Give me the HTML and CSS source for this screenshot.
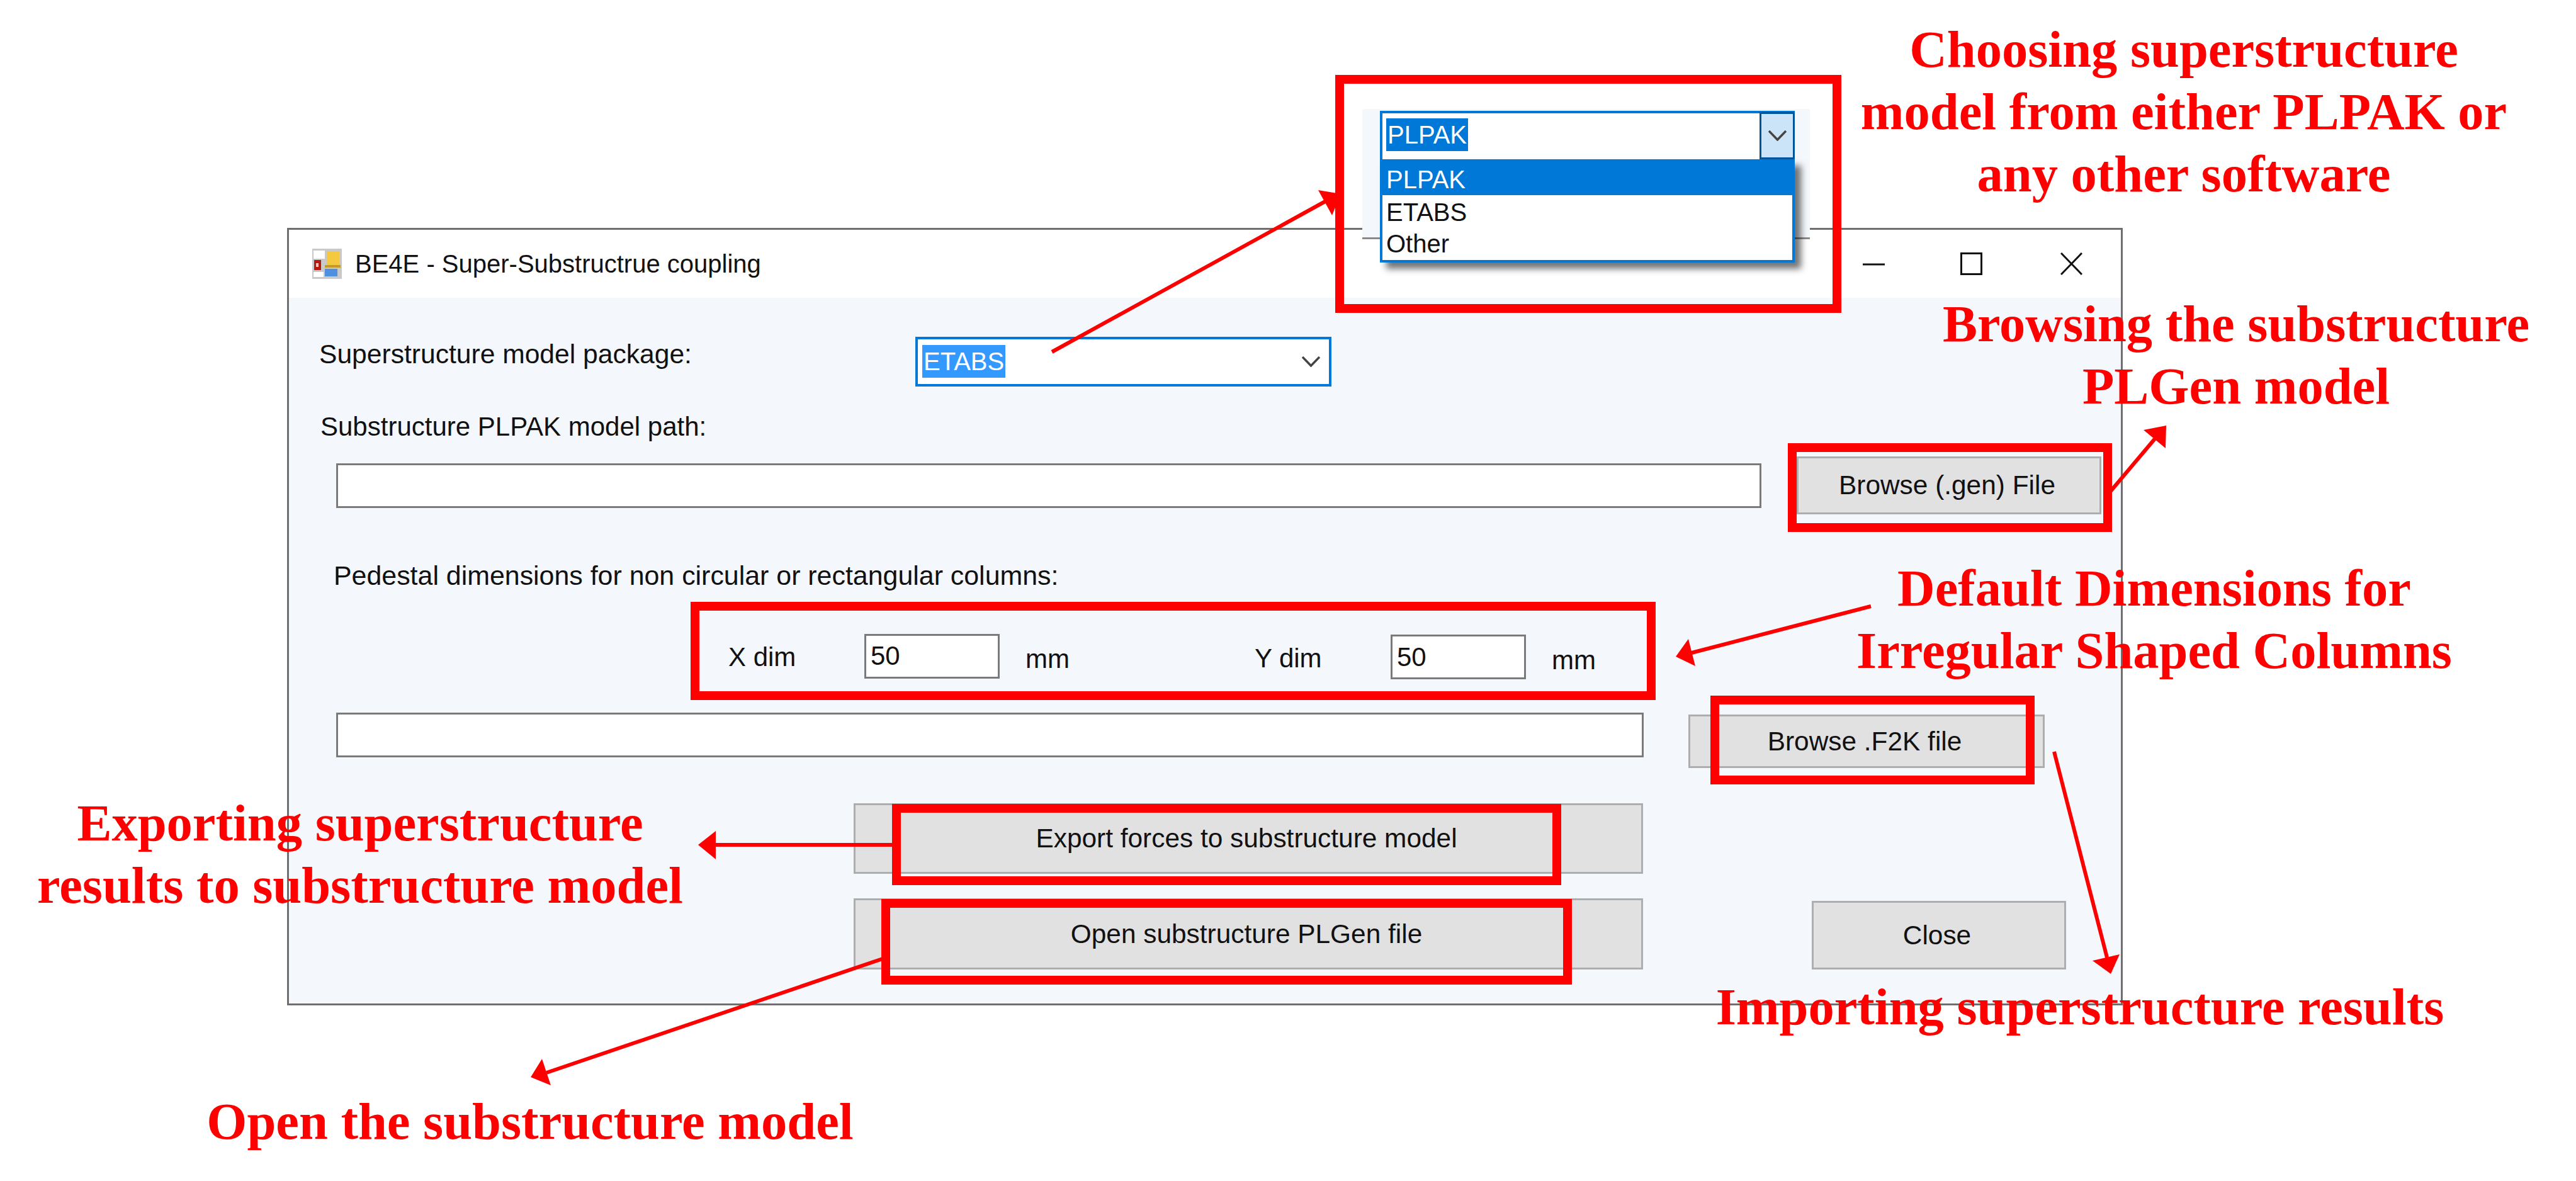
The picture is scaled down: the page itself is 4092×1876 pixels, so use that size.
FILE: index.html
```html
<!DOCTYPE html>
<html lang="en">
<head>
  <meta charset="UTF-8" />
  <title>BE4E - Super-Substructrue coupling</title>
  <link rel="stylesheet" href="styles.css">
</head>
<body>
<div class="page">

  <!-- the dialog -->
  <div class="window">
    <div class="titlebar">
      <svg class="app-icon" width="47" height="48" viewBox="0 0 47 48">
        <rect width="47" height="48" fill="#c9c9c9"/>
        <rect x="2" y="3" width="18" height="13" fill="#fff"/>
        <rect x="2" y="37" width="16" height="8" fill="#fff"/>
        <rect x="3" y="18" width="11" height="16" fill="#b5180f"/>
        <rect x="6" y="23" width="4" height="6" fill="#f3c3b5"/>
        <rect x="23" y="4" width="20" height="22" fill="#f4c93f"/>
        <rect x="20" y="26" width="25" height="4" fill="#c09a2a"/>
        <rect x="20" y="32" width="20" height="12" fill="#4f8fe0"/>
      </svg>
      <span class="title">BE4E - Super-Substructrue coupling</span>
      <div class="win-buttons">
        <svg width="35" height="36" viewBox="0 0 35 36"><path d="M0 19H35" class="glyph"/></svg>
        <svg class="win-max" width="35" height="36" viewBox="0 0 35 36"><rect x="1.5" y="1.5" width="32" height="33" class="glyph"/></svg>
        <svg width="35" height="36" viewBox="0 0 35 36"><path d="M1 1L34 35M34 1L1 35" class="glyph"/></svg>
      </div>
    </div>

    <div class="content">
      <div class="row row-package">
        <div class="label label-package">Superstructure model package:</div>
        <div class="combo">
          <span class="selected">ETABS</span>
          <svg class="chevron" width="29" height="17" viewBox="0 0 29 17"><path d="M1 1L14.5 15L28 1"/></svg>
        </div>
      </div>

      <div class="label label-path">Substructure PLPAK model path:</div>

      <div class="row row-path">
        <input class="field field-gen" type="text" />
        <button class="btn btn-gen">Browse (.gen) File</button>
      </div>

      <div class="label label-pedestal">Pedestal dimensions for non circular or rectangular columns:</div>

      <div class="row row-dims">
        <div class="dim">
          <span class="dim-name">X dim</span>
          <input class="field field-dim" type="text" value="50" />
          <span class="dim-unit">mm</span>
        </div>
        <div class="dim dim-y">
          <span class="dim-name">Y dim</span>
          <input class="field field-dim" type="text" value="50" />
          <span class="dim-unit">mm</span>
        </div>
      </div>

      <div class="row row-f2k">
        <input class="field field-f2k" type="text" />
        <button class="btn btn-f2k">Browse .F2K file</button>
      </div>

      <button class="btn btn-export">Export forces to substructure model</button>

      <div class="row row-bottom">
        <button class="btn btn-open">Open substructure PLGen file</button>
        <button class="btn btn-close">Close</button>
      </div>
    </div>
  </div>

  <!-- pasted crop of the opened dropdown -->
  <div class="snip">
    <div class="snip-combo">
      <span class="snip-selected">PLPAK</span>
      <span class="snip-drop">
        <svg class="chevron" width="29" height="17" viewBox="0 0 29 17"><path d="M1 1L14.5 15L28 1"/></svg>
      </span>
    </div>
    <ul class="snip-list">
      <li class="active">PLPAK</li>
      <li>ETABS</li>
      <li>Other</li>
    </ul>
  </div>

  <!-- red boxes -->
  <div class="callout box-dropdown"></div>
  <div class="callout box-gen"></div>
  <div class="callout box-dims"></div>
  <div class="callout box-f2k"></div>
  <div class="callout box-export"></div>
  <div class="callout box-open"></div>

  <!-- red arrows -->
  <svg class="arrows" width="4092" height="1876" viewBox="0 0 4092 1876">
    <path d="M1671 559L2105 320"/>
    <polygon points="2094,302 2130,308 2116,342"/>
    <path d="M3353 780L3423 697"/>
    <polygon points="3405,683 3441,676 3440,712"/>
    <path d="M2972 963L2687 1037"/>
    <polygon points="2662,1043 2682,1015 2693,1058"/>
    <path d="M1417 1342L1137 1342"/>
    <polygon points="1109,1342 1137,1320 1137,1365"/>
    <path d="M1402 1523L868 1704"/>
    <polygon points="843,1711 861,1682 875,1724"/>
    <path d="M3263 1194L3347 1521"/>
    <polygon points="3353,1547 3324,1526 3367,1516"/>
  </svg>

  <!-- red notes -->
  <div class="note note-dropdown">Choosing superstructure<br>model from either PLPAK or<br>any other software</div>
  <div class="note note-gen">Browsing the substructure<br>PLGen model</div>
  <div class="note note-dims">Default Dimensions for<br>Irregular Shaped Columns</div>
  <div class="note note-export">Exporting superstructure<br>results to substructure model</div>
  <div class="note note-import">Importing superstructure results</div>
  <div class="note note-open">Open the substructure model</div>

</div>
</body>
</html>
```

FILE: styles.css
```css
* {
  box-sizing: border-box;
}
body {
  margin: 0;
  background: #fff;
  overflow: hidden;
}
.page {
  position: relative;
  width: 4092px;
  height: 1876px;
  padding: 362px 0 0 456px;
  font-family: "Liberation Sans", Arial, sans-serif;
  font-size: 42px;
  color: #111;
}

/* window */
.window {
  width: 2916px;
  height: 1235px;
  border: 3px solid #6e6e6e;
  background: #f4f7fc;
}
.titlebar {
  display: flex;
  align-items: center;
  height: 108px;
  padding: 0 61px 0 37px;
  background: #fff;
}
.app-icon {
  margin-right: 21px;
}
.title {
  font-size: 40px;
}
.win-buttons {
  display: flex;
  gap: 120px;
  margin-left: auto;
}
.win-max {
  margin-right: 4px;
}
.glyph {
  fill: none;
  stroke: #111;
  stroke-width: 3;
}
.row {
  display: flex;
}
.label {
  line-height: 54px;
}

/* controls */
.row-package {
  padding: 62px 0 0 48px;
}
.label-package {
  width: 947px;
  font-size: 42.6px;
}
.combo {
  display: flex;
  align-items: center;
  justify-content: space-between;
  width: 661px;
  height: 79px;
  padding: 0 14px 0 7px;
  border: 4px solid #0078d7;
  background: #fff;
}
.selected {
  height: 52px;
  margin-top: -2px;
  padding: 0 2px;
  line-height: 52px;
  font-size: 40px;
  color: #fff;
  background: #3399ff;
}
.chevron {
  fill: none;
  stroke: #444;
  stroke-width: 3.5;
}
.label-path {
  margin: 37px 0 0 50px;
}
.row-path {
  align-items: center;
  gap: 56px;
  margin-top: 20px;
  padding-left: 75px;
}
.field {
  height: 71px;
  padding: 0 7px;
  border: 3px solid #7a7a7a;
  border-radius: 0;
  outline: none;
  background: #fff;
  font-family: inherit;
  font-size: 42px;
  color: #111;
}
.field-gen {
  width: 2264px;
}
.btn {
  padding: 0 6px 0 0;
  border: 3px solid #adadad;
  border-radius: 0;
  background: #e1e1e1;
  font-family: inherit;
  font-size: 42.4px;
  color: #111;
}
.btn-gen {
  width: 484px;
  height: 92px;
}
.label-pedestal {
  margin: 70px 0 0 71px;
  font-size: 42.9px;
}
.row-dims {
  gap: 294px;
  margin-top: 64px;
  padding-left: 698px;
}
.dim {
  display: flex;
  align-items: center;
}
.dim-y {
  margin-top: 3px;
}
.dim-name {
  width: 216px;
  padding-top: 4px;
}
.field-dim {
  width: 215px;
}
.dim-unit {
  margin-left: 41px;
  padding-top: 10px;
}
.row-f2k {
  align-items: flex-start;
  gap: 71px;
  margin-top: 53px;
  padding-left: 75px;
}
.field-f2k {
  width: 2077px;
}
.btn-f2k {
  width: 566px;
  height: 85px;
  margin-top: 3px;
}
.btn-export {
  display: block;
  width: 1254px;
  height: 112px;
  margin: 56px 0 0 897px;
}
.row-bottom {
  align-items: flex-start;
  gap: 268px;
  margin: 39px 0 0 897px;
}
.btn-open {
  width: 1254px;
  height: 113px;
}
.btn-close {
  width: 404px;
  height: 109px;
  margin-top: 4px;
}

/* dropdown crop */
.snip {
  position: absolute;
  left: 2164px;
  top: 173px;
  width: 711px;
  height: 207px;
  padding: 3px 24px 0 28px;
  border-bottom: 3px solid #8a8a8a;
  background: #f4f7fc;
  font-size: 40px;
}
.snip-combo {
  display: flex;
  justify-content: space-between;
  width: 659px;
  height: 77px;
  padding-left: 6px;
  border: 4px solid #0078d7;
  border-bottom: 0;
  background: #fff;
}
.snip-selected {
  height: 52px;
  margin-top: 8px;
  padding: 0 2px;
  line-height: 52px;
  color: #fff;
  background: #0078d7;
}
.snip-drop {
  display: flex;
  align-items: center;
  justify-content: center;
  width: 56px;
  margin: -2px -4px 0 0;
  border: 3px solid #005499;
  background: #cce4f7;
}
.snip-list {
  width: 659px;
  height: 164px;
  margin: 0;
  padding: 0;
  border: 4px solid #0078d7;
  border-top: 0;
  background: #fff;
  box-shadow: 10px 10px 10px rgba(0, 0, 0, 0.55);
  list-style: none;
}
.snip-list li {
  height: 50px;
  padding: 2px 0 0 6px;
  line-height: 50px;
}
.snip-list .active {
  height: 57px;
  padding-top: 4px;
  line-height: 57px;
  color: #fff;
  background: #0078d7;
}

/* annotations */
.callout {
  position: absolute;
  border: 14px solid #f00;
}
.box-dropdown { left: 2121px; top: 119px; width: 804px; height: 378px; }
.box-gen { left: 2840px; top: 704px; width: 515px; height: 141px; }
.box-dims { left: 1097px; top: 956px; width: 1533px; height: 156px; }
.box-f2k { left: 2717px; top: 1105px; width: 515px; height: 141px; }
.box-export { left: 1417px; top: 1277px; width: 1063px; height: 129px; }
.box-open { left: 1400px; top: 1428px; width: 1097px; height: 136px; }

.arrows {
  position: absolute;
  left: 0;
  top: 0;
}
.arrows path {
  fill: none;
  stroke: #f00;
  stroke-width: 6;
}
.arrows polygon {
  fill: #f00;
}

.note {
  position: absolute;
  width: 1200px;
  font-family: "Liberation Serif", "Times New Roman", serif;
  font-size: 82.5px;
  font-weight: bold;
  line-height: 99px;
  color: #f00;
  text-align: center;
  white-space: nowrap;
}
.note-dropdown { left: 2869px; top: 29px; }
.note-gen { left: 2952px; top: 465px; }
.note-dims { left: 2822px; top: 885px; }
.note-export { left: 22px; width: 1100px; top: 1258px; }
.note-import { left: 2704px; top: 1550px; }
.note-open { left: 242px; top: 1732px; }
```
